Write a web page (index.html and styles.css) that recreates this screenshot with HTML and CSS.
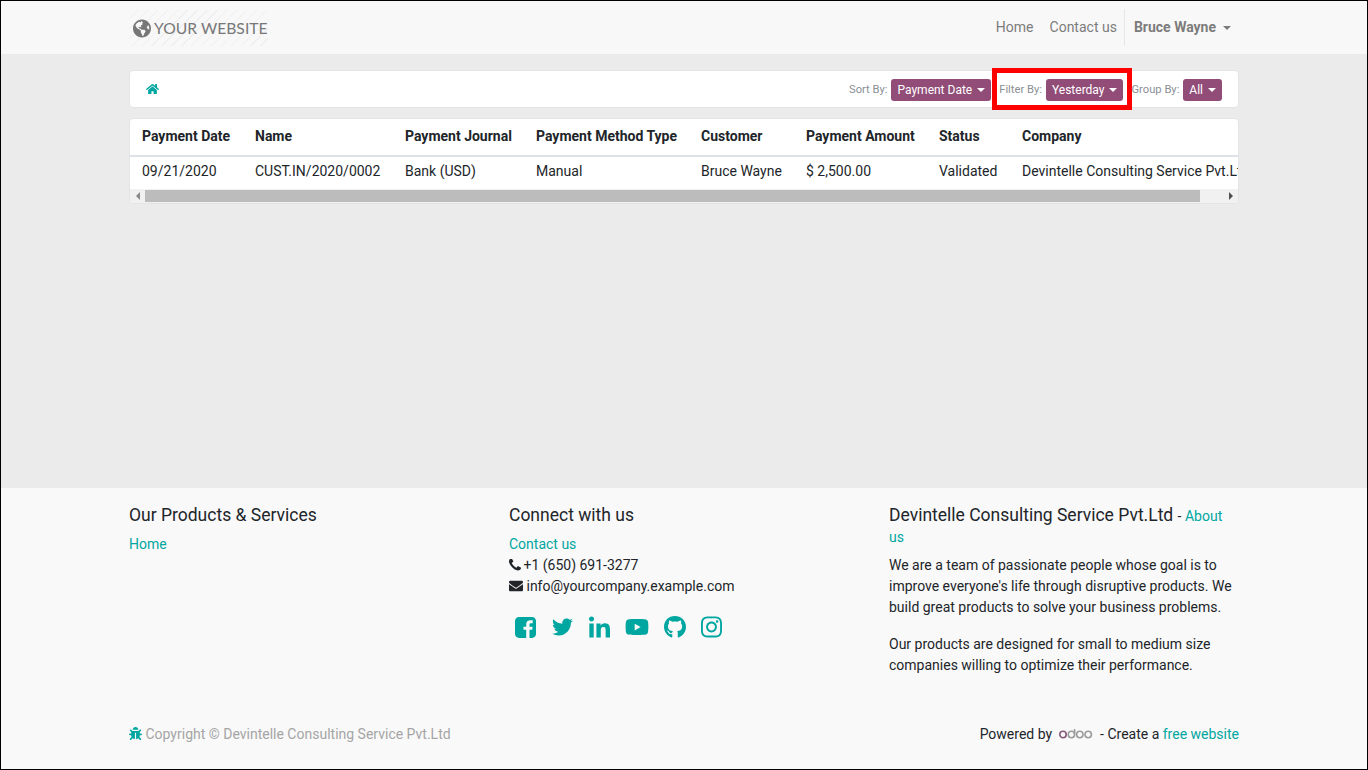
FILE: index.html
```html
<!DOCTYPE html>
<html lang="en">
<head>
  <meta charset="UTF-8">
  <meta name="viewport" content="width=device-width, initial-scale=1.0">
  <title>Payments</title>
  <link rel="stylesheet" href="styles.css">
</head>
<body>
  <div class="page">
    <!-- Top navigation -->
    <header class="navbar">
      <div class="container navbar-inner">
        <a class="brand" href="#">
          <svg class="brand-globe" viewBox="0 0 496 512"><path d="M248 8C111.03 8 0 119.03 0 256s111.03 248 248 248 248-111.03 248-248S384.97 8 248 8zm82.29 357.6c-3.9 3.88-7.99 7.95-11.31 11.28-2.99 3-5.1 6.7-6.17 10.71-1.51 5.66-2.73 11.38-4.77 16.87l-17.39 46.85c-13.76 3-28 4.69-42.65 4.69v-27.38c1.69-12.62-7.64-36.26-22.63-51.25-6-6-9.37-14.14-9.37-22.63v-32.01c0-11.64-6.27-22.34-16.46-27.97-14.37-7.95-34.81-19.06-48.81-26.11-11.48-5.78-22.1-13.14-31.65-21.75l-.8-.72a114.792 114.792 0 0 1-18.06-20.74c-9.38-13.77-24.66-36.42-34.59-51.14 20.47-45.5 57.36-82.04 103.2-101.89l24.01 12.01C203.48 89.74 216 82.01 216 70.11v-11.3c7.99-1.29 16.12-2.11 24.39-2.42l28.3 28.3c6.25 6.25 6.25 16.38 0 22.63L264 112l-10.34 10.34c-3.12 3.12-3.12 8.19 0 11.31l4.69 4.69c3.12 3.12 3.12 8.19 0 11.31l-8 8a8.008 8.008 0 0 1-5.66 2.34h-8.99c-2.08 0-4.08.81-5.58 2.27l-9.92 9.65a8.008 8.008 0 0 0-1.58 9.31l15.59 31.19c2.66 5.32-1.21 11.58-7.15 11.58h-5.64c-1.93 0-3.79-.7-5.24-1.96l-9.28-8.06a16.017 16.017 0 0 0-15.55-3.1l-31.17 10.39a11.95 11.95 0 0 0-8.17 11.34c0 4.53 2.56 8.66 6.61 10.69l11.08 5.54c9.41 4.71 19.79 7.16 30.31 7.16s22.59 27.29 32 32h66.75c8.49 0 16.62 3.37 22.63 9.37l13.69 13.69a30.503 30.503 0 0 1 8.93 21.57 46.536 46.536 0 0 1-13.72 32.98zM417 274.25c-5.79-1.45-10.84-5-14.15-9.97l-17.98-26.97a23.97 23.97 0 0 1 0-26.62l19.59-29.38c2.32-3.47 5.5-6.29 9.24-8.15l12.98-6.49C440.2 193.59 448 223.87 448 256c0 8.67-.74 17.16-1.82 25.54L417 274.25z"/></svg>
          <span>YOUR WEBSITE</span>
        </a>
        <nav class="nav-links">
          <a href="#">Home</a>
          <a href="#">Contact us</a>
          <a class="nav-user" href="#">Bruce Wayne <i class="caret"></i></a>
        </nav>
      </div>
    </header>

    <main class="content">
      <div class="container">
        <!-- Breadcrumb and filters -->
        <div class="toolbar">
          <a class="home-link" href="#">
            <svg viewBox="0 0 576 512"><path d="M280.37 148.26L96 300.11V464a16 16 0 0 0 16 16l112.06-.29a16 16 0 0 0 15.92-16V368a16 16 0 0 1 16-16h64a16 16 0 0 1 16 16v95.64a16 16 0 0 0 16 16.05L464 480a16 16 0 0 0 16-16V300L295.67 148.26a12.19 12.19 0 0 0-15.3 0zM571.6 251.47L488 182.56V44.05a12 12 0 0 0-12-12h-56a12 12 0 0 0-12 12v72.61L318.47 43a48 48 0 0 0-61 0L4.34 251.47a12 12 0 0 0-1.6 16.9l25.5 31A12 12 0 0 0 45.15 301l235.22-193.74a12.19 12.19 0 0 1 15.3 0L530.9 301a12 12 0 0 0 16.9-1.6l25.5-31a12 12 0 0 0-1.7-16.93z"/></svg>
          </a>
          <div class="filters">
            <div class="filter"><span>Sort By:</span><button type="button">Payment Date <i class="caret"></i></button></div>
            <div class="filter filter-marked"><span>Filter By:</span><button type="button">Yesterday <i class="caret"></i></button></div>
            <div class="filter"><span>Group By:</span><button type="button">All <i class="caret"></i></button></div>
          </div>
        </div>

        <!-- Payments table -->
        <div class="table-card">
          <div class="table-clip">
            <table>
              <thead>
                <tr>
                  <th>Payment Date</th>
                  <th>Name</th>
                  <th>Payment Journal</th>
                  <th>Payment Method Type</th>
                  <th>Customer</th>
                  <th>Payment Amount</th>
                  <th>Status</th>
                  <th>Company</th>
                </tr>
              </thead>
              <tbody>
                <tr>
                  <td>09/21/2020</td>
                  <td>CUST.IN/2020/0002</td>
                  <td>Bank (USD)</td>
                  <td>Manual</td>
                  <td>Bruce Wayne</td>
                  <td>$ 2,500.00</td>
                  <td>Validated</td>
                  <td>Devintelle Consulting Service Pvt.Ltd</td>
                </tr>
              </tbody>
            </table>
          </div>
          <div class="scrollbar">
            <span class="scroll-btn"><i class="arrow-left"></i></span>
            <div class="scroll-track"><div class="scroll-thumb"></div></div>
            <span class="scroll-btn"><i class="arrow-right"></i></span>
          </div>
        </div>
      </div>
    </main>

    <footer class="footer">
      <div class="container">
        <div class="footer-cols">
          <section class="footer-col">
            <h5>Our Products &amp; Services</h5>
            <a href="#">Home</a>
          </section>
          <section class="footer-col">
            <h5>Connect with us</h5>
            <div><a href="#">Contact us</a></div>
            <div>
              <svg class="mini-icon phone-icon" viewBox="192 192 1408 1408"><path d="M1600 1240q0 27-10 70.5t-21 68.5q-21 50-122 106-94 51-186 51-27 0-53-3.5t-57.5-12.5-47-14.5-55.5-20.5-49-18q-98-35-175-83-127-79-264-216t-216-264q-48-77-83-175-3-9-18-49t-20.5-55.5-14.5-47-12.5-57.5-3.5-53q0-92 51-186 56-101 106-122 25-11 68.5-21t70.5-10q14 0 21 3 18 6 53 76 11 19 30 54t35 63.5 31 53.5q3 4 17.5 25t21.5 35.5 7 28.5q0 20-28.5 50t-62 55-62 53-28.5 46q0 9 5 22.5t8.5 20.5 14 24 11.5 19q76 137 174 235t235 174q2 1 19 11.5t24 14 20.5 8.5 22.5 5q18 0 46-28.5t53-62 55-62 50-28.5q14 0 28.5 7t35.5 21.5 25 17.5q25 15 53.5 31t63.5 35 54 30q70 35 76 53 3 7 3 21z"/></svg>
              +1 (650) 691-3277
            </div>
            <div>
              <svg class="mini-icon" viewBox="0 0 512 512"><path d="M502.3 190.8c3.9-3.1 9.7-.2 9.7 4.7V400c0 26.5-21.5 48-48 48H48c-26.5 0-48-21.5-48-48V195.6c0-5 5.7-7.8 9.7-4.7 22.4 17.4 52.1 39.5 154.1 113.6 21.1 15.4 56.7 47.8 92.2 47.6 35.7.3 72-32.8 92.3-47.6 102-74.1 131.6-96.3 154-113.7zM256 320c23.2.4 56.6-29.2 73.4-41.4 132.7-96.3 142.8-104.7 173.4-128.7 5.8-4.5 9.2-11.5 9.2-18.9v-19c0-26.5-21.5-48-48-48H48C21.5 64 0 85.5 0 112v19c0 7.4 3.4 14.3 9.2 18.9 30.6 23.9 40.7 32.4 173.4 128.7 16.8 12.2 50.2 41.8 73.4 41.4z"/></svg>
              info@yourcompany.example.com
            </div>
            <div class="social">
              <a href="#"><svg class="s-fb" viewBox="0 128 1536 1536"><path d="M1248 128q119 0 203.5 84.5t84.5 203.5v960q0 119-84.5 203.5t-203.5 84.5h-188v-595h199l30-232h-229v-148q0-56 23.5-84t91.5-28l122-1v-207q-63-9-178-9-136 0-217.5 80t-81.5 226v171h-200v232h200v595h-532q-119 0-203.5-84.5t-84.5-203.5v-960q0-119 84.5-203.5t203.5-84.5h960z"/></svg></a>
              <a href="#"><svg class="s-tw" viewBox="0 0 512 512"><path d="M459.37 151.716c.325 4.548.325 9.097.325 13.645 0 138.72-105.583 298.558-298.558 298.558-59.452 0-114.68-17.219-161.137-47.106 8.447.974 16.568 1.299 25.34 1.299 49.055 0 94.213-16.568 130.274-44.832-46.132-.975-84.792-31.188-98.112-72.772 6.498.974 12.995 1.624 19.818 1.624 9.421 0 18.843-1.3 27.614-3.573-48.081-9.747-84.143-51.98-84.143-102.985v-1.299c13.969 7.797 30.214 12.67 47.431 13.319-28.264-18.843-46.781-51.005-46.781-87.391 0-19.492 5.197-37.36 14.294-52.954 51.655 63.675 129.3 105.258 216.365 109.807-1.624-7.797-2.599-15.918-2.599-24.04 0-57.828 46.782-104.934 104.934-104.934 30.213 0 57.502 12.67 76.67 33.137 23.715-4.548 46.456-13.32 66.599-25.34-7.798 24.366-24.366 44.833-46.132 57.827 21.117-2.273 41.584-8.122 60.426-16.243-14.292 20.791-32.161 39.308-52.628 54.253z"/></svg></a>
              <a href="#"><svg class="s-in" viewBox="0 -32 448 512"><path d="M100.28 448H7.4V148.9h92.88zM53.79 108.1C24.09 108.1 0 83.5 0 53.8a53.79 53.79 0 0 1 107.58 0c0 29.7-24.1 54.3-53.79 54.3zM447.9 448h-92.68V302.4c0-34.7-.7-79.2-48.29-79.2-48.29 0-55.69 37.7-55.69 76.7V448h-92.78V148.9h89.08v40.8h1.3c12.4-23.5 42.69-48.3 87.88-48.3 94 0 111.28 61.9 111.28 142.3V448z"/></svg></a>
              <a href="#"><svg class="s-yt" viewBox="0 0 576 512"><path d="M549.655 124.083c-6.281-23.65-24.787-42.276-48.284-48.597C458.781 64 288 64 288 64S117.22 64 74.629 75.486c-23.497 6.322-42.003 24.947-48.284 48.597-11.412 42.867-11.412 132.305-11.412 132.305s0 89.438 11.412 132.305c6.281 23.65 24.787 41.5 48.284 47.821C117.22 448 288 448 288 448s170.78 0 213.371-11.486c23.497-6.321 42.003-24.171 48.284-47.821 11.412-42.867 11.412-132.305 11.412-132.305s0-89.438-11.412-132.305zm-317.51 213.508V175.185l142.739 81.205-142.739 81.201z"/></svg></a>
              <a href="#"><svg class="s-gh" viewBox="0 0 496 512"><path d="M165.9 397.4c0 2-2.3 3.6-5.2 3.6-3.3 0-5.6-1.6-5.6-3.6 0-2 2.3-3.6 5.2-3.6 3-.3 5.6 1.3 5.6 3.6zm-31.1-4.5c-.7 2 1.3 4.3 4.3 4.9 2.6 1 5.6 0 6.2-2s-1.3-4.3-4.3-5.2c-2.6-.7-5.5.3-6.2 2.3zm44.2-1.7c-2.9.7-4.9 2.6-4.6 4.9.3 2 2.9 3.3 5.9 2.6 2.9-.7 4.9-2.6 4.6-4.6-.3-1.9-3-3.2-5.9-2.9zM244.8 8C106.1 8 0 113.3 0 252c0 110.9 69.8 205.8 169.5 239.2 12.8 2.3 17.3-5.6 17.3-12.1 0-6.2-.3-40.4-.3-61.4 0 0-70 15-84.7-29.8 0 0-11.4-29.1-27.8-36.6 0 0-22.9-15.7 1.6-15.4 0 0 24.9 2 38.6 25.8 21.9 38.6 58.6 27.5 72.9 20.9 2.3-16 8.8-27.1 16-33.7-55.9-6.2-112.3-14.3-112.3-110.5 0-27.5 7.6-41.3 23.6-58.9-2.6-6.5-11.1-33.3 2.6-67.9 20.9-6.5 69 27 69 27 20-5.6 41.5-8.5 62.8-8.5s42.8 2.9 62.8 8.5c0 0 48.1-33.6 69-27 13.7 34.7 5.2 61.4 2.6 67.9 16 17.7 25.8 31.5 25.8 58.9 0 96.5-58.9 104.2-114.8 110.5 9.2 7.9 17 22.9 17 46.4 0 33.7-.3 75.4-.3 83.6 0 6.5 4.6 14.4 17.3 12.1C428.2 457.8 496 362.9 496 252 496 113.3 383.5 8 244.8 8z"/></svg></a>
              <a href="#"><svg class="s-ig" viewBox="0 0 448 512"><path d="M224.1 141c-63.6 0-114.9 51.3-114.9 114.9s51.3 114.9 114.9 114.9S339 319.5 339 255.9 287.7 141 224.1 141zm0 189.6c-41.1 0-74.7-33.5-74.7-74.7s33.5-74.7 74.7-74.7 74.7 33.5 74.7 74.7-33.6 74.7-74.7 74.7zm146.4-194.3c0 14.9-12 26.8-26.8 26.8-14.9 0-26.8-12-26.8-26.8s12-26.8 26.8-26.8 26.8 12 26.8 26.8zm76.1 27.2c-1.7-35.9-9.9-67.7-36.2-93.9-26.2-26.2-58-34.4-93.9-36.2-37-2.1-147.9-2.1-184.9 0-35.8 1.7-67.6 9.9-93.9 36.1s-34.4 58-36.2 93.9c-2.1 37-2.1 147.9 0 184.9 1.7 35.9 9.9 67.7 36.2 93.9s58 34.4 93.9 36.2c37 2.1 147.9 2.1 184.9 0 35.9-1.7 67.7-9.9 93.9-36.2 26.2-26.2 34.4-58 36.2-93.9 2.1-37 2.1-147.8 0-184.8zM398.8 388c-7.8 19.6-22.9 34.7-42.6 42.6-29.5 11.7-99.5 9-132.1 9s-102.7 2.6-132.1-9c-19.6-7.8-34.7-22.9-42.6-42.6-11.7-29.5-9-99.5-9-132.1s-2.6-102.7 9-132.1c7.8-19.6 22.9-34.7 42.6-42.6 29.5-11.7 99.5-9 132.1-9s102.7-2.6 132.1 9c19.6 7.8 34.7 22.9 42.6 42.6 11.7 29.5 9 99.5 9 132.1s2.7 102.7-9 132.1z"/></svg></a>
            </div>
          </section>
          <section class="footer-col">
            <h5 class="about-head">Devintelle Consulting Service Pvt.Ltd <small>- <a href="#">About us</a></small></h5>
            <p>We are a team of passionate people whose goal is to improve everyone's life through disruptive products. We build great products to solve your business problems.</p>
            <p>Our products are designed for small to medium size companies willing to optimize their performance.</p>
          </section>
        </div>

        <div class="footer-bottom">
          <div class="copyright">
            <svg class="bug-icon" viewBox="0 0 512 512"><path d="M511.988 288.9c-.478 17.43-15.217 31.1-32.653 31.1H424v16c0 21.864-4.882 42.584-13.6 61.145l60.228 60.228c12.496 12.497 12.496 32.758 0 45.255-12.498 12.497-32.759 12.496-45.256 0l-54.736-54.736C345.886 467.965 314.351 480 280 480V236c0-6.627-5.373-12-12-12h-24c-6.627 0-12 5.373-12 12v244c-34.351 0-65.886-12.035-90.636-32.108l-54.736 54.736c-12.498 12.497-32.759 12.496-45.256 0-12.496-12.497-12.496-32.758 0-45.255l60.228-60.228C92.882 378.584 88 357.864 88 336v-16H32.666C15.23 320 .491 306.33.013 288.9-.484 270.816 14.028 256 32 256h56v-58.745l-46.628-46.628c-12.496-12.497-12.496-32.758 0-45.255 12.498-12.497 32.758-12.497 45.256 0L141.255 160h229.489l54.627-54.627c12.498-12.497 32.758-12.497 45.256 0 12.496 12.497 12.496 32.758 0 45.255L424 197.255V256h56c17.972 0 32.484 14.816 31.988 32.9zM257 0c-61.856 0-112 50.144-112 112h224C369 50.144 318.856 0 257 0z"/></svg>
            Copyright &copy; Devintelle Consulting Service Pvt.Ltd
          </div>
          <div class="powered">
            Powered by
            <svg class="odoo-logo" viewBox="0 0 34 10">
              <circle class="odoo-o1" cx="4" cy="5.5" r="3.2"/>
              <circle cx="12.4" cy="5.5" r="3.2"/>
              <path d="M15.6 5.5V0"/>
              <circle cx="20.8" cy="5.5" r="3.2"/>
              <circle cx="29.2" cy="5.5" r="3.2"/>
            </svg>
            - Create a <a href="#">free website</a>
          </div>
        </div>
      </div>
    </footer>
  </div>
</body>
</html>
```

FILE: styles.css
```css
* {
  box-sizing: border-box;
}
html, body {
  margin: 0;
  padding: 0;
}
body {
  font-family: Roboto, "Liberation Sans", sans-serif;
  font-size: 14px;
  line-height: 21px;
  color: #212529;
}
a {
  color: #00a6a0;
  text-decoration: none;
}
.page {
  display: flex;
  flex-direction: column;
  min-height: 100vh;
  border: 1px solid #000;
}
.container {
  width: 1110px;
  margin: 0 auto;
}

/* navbar */
.navbar {
  height: 53px;
  background: #f8f8f8;
}
.navbar-inner {
  display: flex;
  justify-content: space-between;
  align-items: center;
  height: 100%;
}
.brand {
  display: flex;
  align-items: center;
  gap: 3px;
  width: 139px;
  height: 36px;
  margin-top: 1px;
  padding-left: 4px;
  color: #777;
  font-family: Lato, sans-serif;
  font-size: 15.7px;
  white-space: nowrap;
  background: repeating-linear-gradient(135deg, #f8f8f8 0, #f8f8f8 6px, #efefef 6px, #efefef 7px);
}
.brand-globe {
  width: 18px;
  height: 19px;
  flex-shrink: 0;
  fill: #777;
}
.nav-links {
  display: flex;
  align-items: center;
  height: 37px;
}
.nav-links a {
  padding: 0 8px;
  color: #7c7c7c;
}
.nav-links .nav-user {
  display: flex;
  align-items: center;
  gap: 7px;
  height: 100%;
  margin-left: -1px;
  padding: 0 8px 0 9px;
  border-left: 1px solid #e6e6e6;
  font-weight: 700;
}
.caret {
  display: inline-block;
  width: 0;
  height: 0;
  border-top: 4px solid currentColor;
  border-left: 4px solid transparent;
  border-right: 4px solid transparent;
  vertical-align: 2px;
}

/* main area */
.content {
  flex: 1;
  padding-top: 16px;
  background: #ebebeb;
}
.toolbar {
  display: flex;
  justify-content: space-between;
  align-items: center;
  height: 38px;
  padding: 0 16px;
  background: #fff;
  border: 1px solid #e2e4e8;
  border-radius: 4px;
}
.home-link {
  display: flex;
}
.home-link svg {
  width: 13px;
  height: 12px;
  fill: #00a6a0;
}
.filters {
  display: flex;
  gap: 8px;
  padding-top: 2px;
}
.filter {
  position: relative;
  display: flex;
  align-items: center;
  gap: 4px;
  font-size: 11.2px;
  color: #8a8f94;
}
.filter span {
  padding-bottom: 1px;
}
.filter button {
  height: 22px;
  padding: 0 6px;
  border: none;
  border-radius: 3px;
  background: #914c78;
  color: #fff;
  font-family: inherit;
  font-size: 12px;
}
.filter button .caret {
  margin-left: 2px;
}
/* red annotation around the filter */
.filter-marked::after {
  content: "";
  position: absolute;
  top: -11px;
  bottom: -9px;
  left: -7px;
  right: -9px;
  border: 5px solid #f00;
}

/* table */
.table-card {
  margin-top: 10px;
  background: #fff;
  border: 1px solid #e2e4e8;
  border-radius: 4px;
  overflow: hidden;
}
.table-clip {
  overflow: hidden;
}
table {
  width: 1132px;
  table-layout: fixed;
  border-collapse: collapse;
  white-space: nowrap;
}
th, td {
  padding: 0 12px;
  text-align: left;
}
th {
  height: 37px;
  padding-bottom: 2px;
  border-bottom: 2px solid #dee2e6;
}
td {
  height: 33px;
  padding-bottom: 3px;
}
th:nth-child(1) { width: 113px; }
th:nth-child(2) { width: 150px; }
th:nth-child(3) { width: 131px; }
th:nth-child(4) { width: 165px; }
th:nth-child(5) { width: 105px; }
th:nth-child(6) { width: 133px; }
th:nth-child(7) { width: 83px; }
.scrollbar {
  display: flex;
  height: 14px;
  background: #f1f1f1;
}
.scroll-btn {
  display: flex;
  align-items: center;
  justify-content: center;
  width: 15px;
}
.arrow-left, .arrow-right {
  width: 0;
  height: 0;
  border-top: 4px solid transparent;
  border-bottom: 4px solid transparent;
}
.arrow-left {
  border-right: 4px solid #888;
}
.arrow-right {
  border-left: 4px solid #505050;
}
.scroll-track {
  flex: 1;
  padding: 1px 0;
}
.scroll-thumb {
  width: 1055px;
  height: 100%;
  background: #bcbcbc;
}

/* footer */
.footer {
  padding: 17px 0 24px;
  background: #f9f9f9;
}
.footer-cols {
  display: grid;
  grid-template-columns: 380px 380px 350px;
}
.footer h5 {
  margin: 0 0 8px;
  font-size: 17.5px;
  font-weight: 400;
  line-height: 21px;
}
.footer .about-head {
  line-height: 20px;
}
.about-head small {
  font-size: 14px;
}
.footer p {
  margin: 0 0 16px;
}
.mini-icon {
  width: 14px;
  height: 14px;
  fill: #212529;
  vertical-align: -2px;
}
.phone-icon {
  width: 12px;
  height: 12px;
  margin-right: -1px;
  vertical-align: -1px;
}
.social {
  display: flex;
  align-items: center;
  gap: 15px;
  height: 24px;
  margin-top: 18px;
  padding-left: 6px;
}
.social a {
  display: flex;
}
.social svg {
  height: 24px;
  fill: #00a6a0;
}
.social svg.s-fb {
  height: 21px;
}
.s-fb, .s-tw {
  margin-right: 1px;
}
.s-fb, .s-tw, .s-in, .s-ig {
  width: 21px;
}
.s-yt {
  width: 24px;
}
.s-gh {
  width: 22px;
}
.footer-bottom {
  display: flex;
  justify-content: space-between;
  margin-top: 32px;
}
.copyright {
  color: #a5a5a5;
}
.bug-icon {
  width: 13px;
  height: 13px;
  fill: #00a6a0;
  vertical-align: -1px;
}
.odoo-logo {
  width: 34px;
  height: 10px;
  margin: 0 3.5px;
  fill: none;
  stroke: #9c9c9c;
  stroke-width: 1.6;
}
.odoo-o1 {
  stroke: #875a7b;
}
```
